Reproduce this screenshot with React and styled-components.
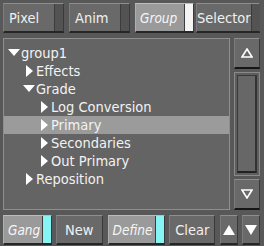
import React from 'react';
import styled, { createGlobalStyle } from 'styled-components';

const Global = createGlobalStyle`
  html, body {
    margin: 0;
    padding: 0;
    background: #585858;
  }
  body {
    font-family: "DejaVu Sans Condensed", "DejaVu Sans", "Liberation Sans", sans-serif;
    font-stretch: condensed;
    font-size: 14.5px;
    color: #f2f2f2;
  }
`;

const Screen = styled.div`
  width: 264px;
  height: 246px;
  box-sizing: border-box;
  padding: 3px 4px 3px 3px;
  display: flex;
  flex-direction: column;
  gap: 5px;
  overflow: hidden;
`;

const Bar = styled.div`
  display: flex;
  height: 30px;
  flex: none;
`;

const Button = styled.div`
  box-sizing: border-box;
  width: ${p => p.w}px;
  margin-left: ${p => p.gap || 0}px;
  height: 30px;
  display: flex;
  align-items: stretch;
  background: ${p => (p.active ? '#9a9a9a' : '#696969')};
  border-top: 1px solid ${p => (p.active ? '#bcbcbc' : '#8e8e8e')};
  border-left: 1px solid ${p => (p.active ? '#b0b0b0' : '#7c7c7c')};
  border-right: 1px solid #3a3a3a;
  border-bottom: 2px solid #262626;
`;

const Label = styled.span`
  flex: 1;
  display: flex;
  align-items: center;
  justify-content: ${p => (p.left ? 'flex-start' : 'center')};
  padding-left: ${p => (p.left ? (p.italic ? 4 : 5) : 0)}px;
  font-style: ${p => (p.italic ? 'oblique' : 'normal')};
  font-size: ${p => (p.italic ? '13.5px' : 'inherit')};
  color: ${p => (p.active ? '#f6f6f6' : '#f0f0f0')};
  white-space: nowrap;
`;

const Lamp = styled.span`
  width: 8px;
  flex: none;
  background: ${p => p.color || '#535353'};
  border-left: 1px solid #3c3c3c;
`;

const Middle = styled.div`
  display: flex;
  gap: 4px;
  height: 172px;
  flex: none;
`;

const Tree = styled.div`
  box-sizing: border-box;
  width: 227px;
  height: 172px;
  border: 1px solid #8e8e8e;
  background: #646464;
  padding-top: 5px;
  display: flex;
  flex-direction: column;
`;

const Row = styled.div`
  height: 18px;
  display: flex;
  align-items: center;
  padding-left: ${p => 2 + p.level * 15}px;
  background: ${p => (p.selected ? '#9b9b9b' : 'transparent')};
  white-space: nowrap;
`;

const Twisty = styled.svg`
  width: 15px;
  height: 12px;
  flex: none;
`;

const Scroller = styled.div`
  width: 26px;
  display: flex;
  flex-direction: column;
  gap: 3px;
`;

const ArrowButton = styled.div`
  box-sizing: border-box;
  height: ${p => p.h}px;
  display: flex;
  align-items: center;
  justify-content: center;
  background: #696969;
  border-top: 1px solid #8e8e8e;
  border-left: 1px solid #7c7c7c;
  border-right: 1px solid #3a3a3a;
  border-bottom: 2px solid #161616;
`;

const Track = styled.div`
  flex: 1;
  box-sizing: border-box;
  border: 1px solid #8a8a8a;
  background: #5e5e5e;
  padding: 2px;
  display: flex;
`;

const Thumb = styled.div`
  flex: 1;
  box-sizing: border-box;
  background: #676767;
  border-top: 1px solid #3a3a3a;
  border-left: 1px solid #3a3a3a;
  border-right: 2px solid #333;
  border-bottom: 2px solid #222;
`;

const Right = () => (
  <Twisty viewBox="0 0 15 12">
    <polygon points="5,0 12,6 5,12" fill="#ffffff" />
  </Twisty>
);

const Down = () => (
  <Twisty viewBox="0 0 15 12">
    <polygon points="2,2 14,2 8,9" fill="#ffffff" />
  </Twisty>
);

const rows = [
  { level: 0, open: true, name: 'group1' },
  { level: 1, name: 'Effects' },
  { level: 1, open: true, name: 'Grade' },
  { level: 2, name: 'Log Conversion' },
  { level: 2, name: 'Primary', selected: true },
  { level: 2, name: 'Secondaries' },
  { level: 2, name: 'Out Primary' },
  { level: 1, name: 'Reposition' },
];

export default function App() {
  return (
    <>
      <Global />
      <Screen>
        <Bar>
          <Button w={61}>
            <Label left>Pixel</Label>
            <Lamp />
          </Button>
          <Button w={61} gap={5}>
            <Label left>Anim</Label>
            <Lamp />
          </Button>
          <Button w={59} gap={5} active>
            <Label left italic active>Group</Label>
            <Lamp color="#f4f4f4" />
          </Button>
          <Button w={64} gap={2}>
            <Label>Selector</Label>
            <Lamp />
          </Button>
        </Bar>
        <Middle>
          <Tree>
            {rows.map(r => (
              <Row key={r.name} level={r.level} selected={r.selected}>
                {r.open ? <Down /> : <Right />}
                <span>{r.name}</span>
              </Row>
            ))}
          </Tree>
          <Scroller>
            <ArrowButton h={31}>
              <svg width="12" height="10" viewBox="0 0 12 10">
                <polygon points="6,1 11,9 1,9" fill="none" stroke="#fff" strokeWidth="1.6" />
              </svg>
            </ArrowButton>
            <Track>
              <Thumb />
            </Track>
            <ArrowButton h={31}>
              <svg width="12" height="10" viewBox="0 0 12 10">
                <polygon points="1,1 11,1 6,9" fill="none" stroke="#fff" strokeWidth="1.6" />
              </svg>
            </ArrowButton>
          </Scroller>
        </Middle>
        <Bar>
          <Button w={49} active>
            <Label left italic active>Gang</Label>
            <Lamp color="#86f4f4" />
          </Button>
          <Button w={47} gap={4}>
            <Label>New</Label>
          </Button>
          <Button w={58} gap={5} active>
            <Label left italic active>Define</Label>
            <Lamp color="#86f4f4" />
          </Button>
          <Button w={46} gap={4}>
            <Label>Clear</Label>
          </Button>
          <Button w={18} gap={5}>
            <Label>
              <svg width="12" height="12" viewBox="0 0 12 12">
                <polygon points="6,1 12,11 0,11" fill="#fff" />
              </svg>
            </Label>
          </Button>
          <Button w={18} gap={4}>
            <Label>
              <svg width="12" height="12" viewBox="0 0 12 12">
                <polygon points="0,1 12,1 6,11" fill="#fff" />
              </svg>
            </Label>
          </Button>
        </Bar>
      </Screen>
    </>
  );
}
